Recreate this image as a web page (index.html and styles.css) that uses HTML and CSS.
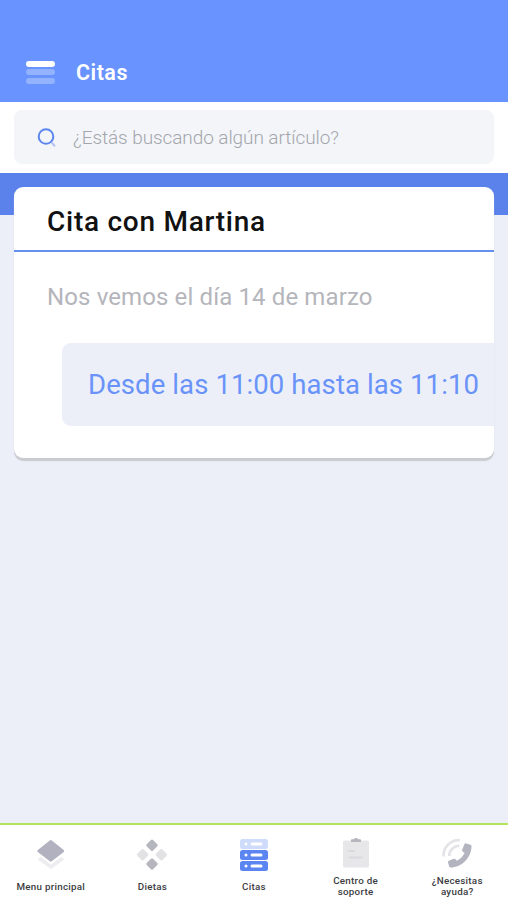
FILE: index.html
```html
<!DOCTYPE html>
<html lang="es">
<head>
<meta charset="UTF-8" />
<meta name="viewport" content="width=device-width, initial-scale=1" />
<title>Citas</title>
<link rel="stylesheet" href="styles.css">
</head>
<body>

<header class="header">
  <div class="menu-btn">
    <span class="active"></span>
    <span></span>
    <span></span>
  </div>
  <h1>Citas</h1>
</header>

<div class="search">
  <div class="search-box">
    <svg width="20" height="20" viewBox="0 0 20 20" fill="none">
      <path d="M14.500 15.500l3.500 3.800" stroke="#b4c5f5" stroke-width="2" />
      <circle cx="9" cy="9.500" r="7.300" stroke="#5b86ee" stroke-width="2" />
    </svg>
    <span class="placeholder">¿Estás buscando algún artículo?</span>
  </div>
</div>

<main class="content">
  <section class="card">
    <h2>Cita con Martina</h2>
    <p class="date">Nos vemos el día 14 de marzo</p>
    <div class="time"><span>Desde las 11:00 hasta las 11:10</span></div>
  </section>
</main>

<nav class="tabs">
  <a class="tab">
    <svg width="34" height="34" viewBox="0 0 34 34">
      <path d="M4.500 20.500l2.500-1.500 10 7.800 10-7.800 2.500 1.500c.7.500.7 1 0 1.600L18 30.500q-1 .8-2 0L4.500 22.100c-.7-.6-.7-1.100 0-1.600z" fill="#ededef" />
      <path d="M15.800 2.500q1-.8 2 0L29.700 11.900q1.200 1 0 2L17.800 23.300q-1 .8-2 0L3.800 13.900q-1.200-1 0-2z" fill="#b1b1bf" />
    </svg>
    <span class="label">Menu principal</span>
  </a>
  <a class="tab">
    <svg width="34" height="34" viewBox="0 0 34 34">
      <g fill="#b6b6bf">
        <rect x="12.500" y="2.800" width="9" height="9" rx="1.500" transform="rotate(45 17 7.300)" />
        <rect x="12.500" y="21.500" width="9" height="9" rx="1.500" transform="rotate(45 17 26)" />
      </g>
      <g fill="#e2e2e5">
        <rect x="3.200" y="12.200" width="9" height="9" rx="1.500" transform="rotate(45 7.700 16.700)" />
        <rect x="21.800" y="12.200" width="9" height="9" rx="1.500" transform="rotate(45 26.300 16.700)" />
      </g>
    </svg>
    <span class="label">Dietas</span>
  </a>
  <a class="tab">
    <svg width="34" height="34" viewBox="0 0 34 34">
      <rect x="3" y="1" width="28" height="10" rx="2.500" fill="#cfdbfb" />
      <rect x="3" y="12" width="28" height="10" rx="2.500" fill="#5b86f2" />
      <rect x="3" y="23" width="28" height="10" rx="2.500" fill="#5b86f2" />
      <g fill="#fff">
        <circle cx="9" cy="6" r="1.500" />
        <rect x="13.500" y="4.400" width="12" height="3.200" rx="1.500" />
        <circle cx="9" cy="17" r="1.500" />
        <rect x="13.500" y="15.400" width="12" height="3.200" rx="1.500" />
        <circle cx="9" cy="28" r="1.500" />
        <rect x="13.500" y="26.400" width="12" height="3.200" rx="1.500" />
      </g>
    </svg>
    <span class="label">Citas</span>
  </a>
  <a class="tab">
    <svg width="34" height="34" viewBox="0 0 34 34">
      <rect x="4" y="2.500" width="26" height="27" rx="1.500" fill="#e7e7e9" />
      <path d="M12 4V2q0-.8.800-.8h1.700q2.500-2.400 5 0h1.700q.8 0 .8.800v2z" fill="#b6b6bf" />
      <path d="M9.500 13h6.500M9.500 19.500h14" stroke="#dadade" stroke-width="2" />
    </svg>
    <span class="label">Centro de<br>soporte</span>
  </a>
  <a class="tab">
    <svg width="34" height="34" viewBox="0 0 34 34">
      <path d="M3.500 18.500A15.500 15.500 0 0 1 20 2.200M9.200 18A10.300 10.300 0 0 1 19.500 7.800" fill="none" stroke="#e4e4e8" stroke-width="2.600" />
      <path d="M24.500 6q.5-1 1.700-.6l4.300 1.300q1 .3 1 1.300C31.500 19.500 22 29.500 10.500 29.500q-1 0-1.300-1L8 24.500q-.3-1.200.8-1.700l5-2q1-.4 1.700.4l1.500 1.500c3.300-1.600 6-4.300 7.600-7.600l-2-1.600q-.8-.7-.4-1.700z" fill="#b4b4c1" />
    </svg>
    <span class="label">¿Necesitas<br>ayuda?</span>
  </a>
</nav>

</body>
</html>
```
FILE: styles.css
```css
* {
  box-sizing: border-box;
}
body {
  font-family: Roboto, 'Liberation Sans', sans-serif;
  background: #eceff8;
  margin: 0;
  height: 900px;
  display: flex;
  flex-direction: column;
  overflow: hidden;
}
h1, h2, p {
  margin: 0;
}
.header {
  height: 102px;
  padding: 42px 26px 0;
  background: #6993ff;
  display: flex;
  align-items: center;
  gap: 21px;
}
.menu-btn {
  display: flex;
  flex-direction: column;
  gap: 2.5px;
}
.menu-btn span {
  width: 29px;
  height: 6px;
  border-radius: 3px;
  background: #94b3ff;
}
.menu-btn .active {
  background: #fff;
}
.header h1 {
  color: #fff;
  font-size: 21.5px;
  font-weight: 600;
  letter-spacing: 0.5px;
}
.search {
  height: 71px;
  padding: 8px 14px 9px;
  background: #fff;
}
.search-box {
  height: 54px;
  padding-left: 23px;
  border-radius: 8px;
  background: #f3f5f9;
  display: flex;
  align-items: center;
  gap: 16px;
}
.placeholder {
  color: #a3a5ab;
  font-size: 19px;
  font-weight: 300;
  letter-spacing: -0.08px;
  white-space: nowrap;
}
.content {
  flex: 1;
  padding: 14px 14px 0;
  background: linear-gradient(#5a82ea 42px, #eceff8 42px);
}
.card {
  height: 271px;
  background: #fff;
  border-radius: 9px;
  box-shadow: 0 3px 1px #c9cbd1;
  overflow: hidden;
}
.card h2 {
  height: 65px;
  padding-left: 33px;
  border-bottom: 2px solid #6490ee;
  color: #111;
  font-size: 28px;
  font-weight: 500;
  letter-spacing: 0.73px;
  line-height: 69px;
}
.date {
  padding-left: 33px;
  margin-top: 30px;
  color: #b5b5bc;
  font-size: 24px;
  letter-spacing: 0.12px;
  line-height: 30px;
}
.time {
  height: 83px;
  margin: 31px 0 0 48px;
  padding-left: 26px;
  border-radius: 9px 0 0 9px;
  background: #eceff8;
  color: #6993f8;
  font-size: 27.5px;
  letter-spacing: 0.1px;
  line-height: 84px;
  white-space: nowrap;
}
.tabs {
  height: 77px;
  border-top: 2px solid #b4e45c;
  background: #fff;
  display: grid;
  grid-template-columns: repeat(5, 1fr);
}
.tab {
  padding-top: 13px;
  display: flex;
  flex-direction: column;
  align-items: center;
}
.label {
  height: 28px;
  display: flex;
  align-items: center;
  color: #3c3c3f;
  font-size: 9.8px;
  font-weight: 500;
  letter-spacing: 0.26px;
  line-height: 11px;
  text-align: center;
}
```
